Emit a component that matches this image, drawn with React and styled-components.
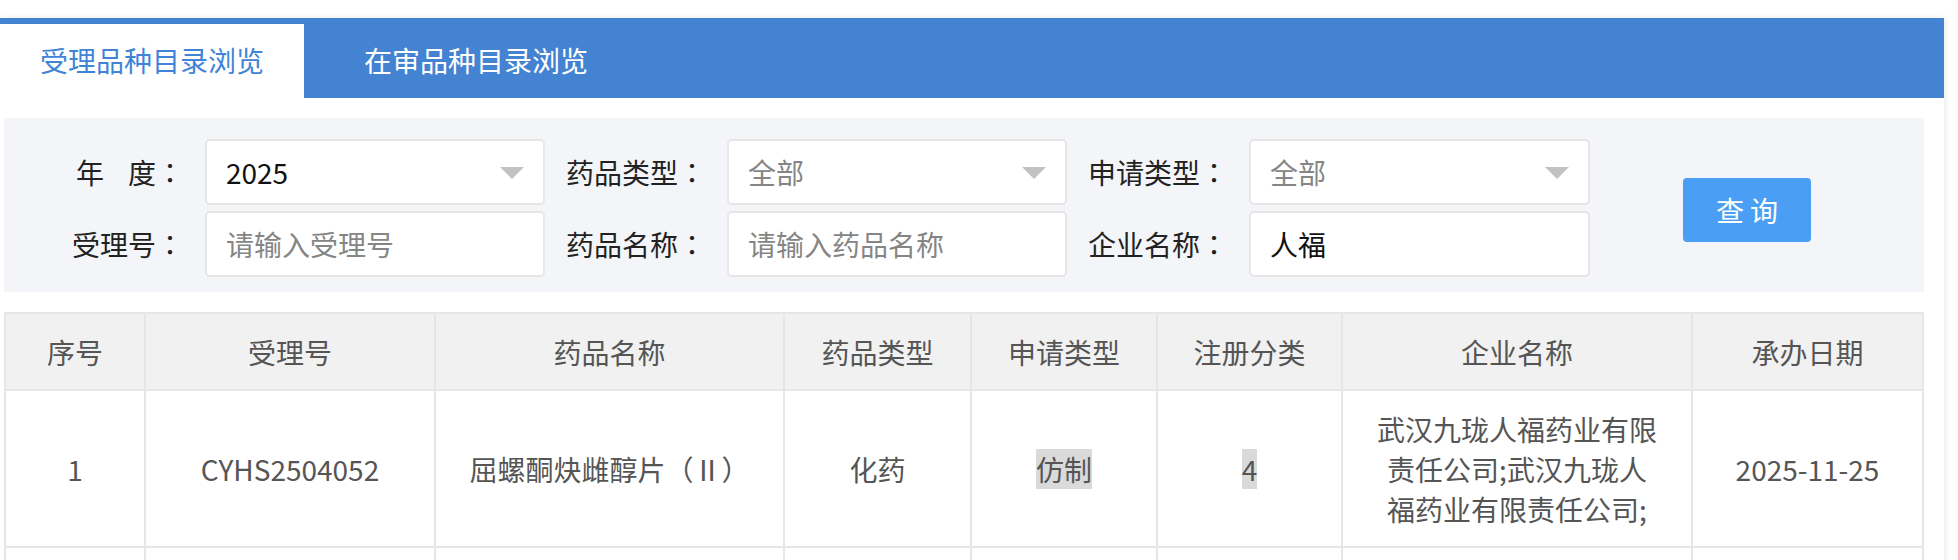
import React from "react";
import styled, { createGlobalStyle } from "styled-components";

const GlobalStyle = createGlobalStyle`
  body {
    margin: 0;
    background: #ffffff;
    font-family: "Noto Sans CJK SC", "Noto Sans", sans-serif;
  }
`;

const Page = styled.div`
  padding-top: 18px;
`;

const Frame = styled.div`
  width: 1944px;
  min-height: 560px;
  background: #ffffff;
  box-shadow: 2px 0 6px rgba(0, 0, 0, 0.08);
`;

const TabBar = styled.div`
  display: flex;
  align-items: flex-end;
  height: 80px;
  background: #4483d2;
`;

const Tab = styled.div`
  display: flex;
  align-items: center;
  justify-content: ${(p) => (p.$active ? "center" : "flex-start")};
  height: 74px;
  width: ${(p) => (p.$active ? "304px" : "auto")};
  padding-left: ${(p) => (p.$active ? "0" : "60px")};
  background: ${(p) => (p.$active ? "#ffffff" : "transparent")};
  color: ${(p) => (p.$active ? "#3f84d6" : "#ffffff")};
  font-size: 28px;
  line-height: 1;
  padding-bottom: 2px;
  box-sizing: border-box;
`;

const Body = styled.div`
  padding: 20px 20px 0 4px;
`;

const Filter = styled.div`
  display: grid;
  grid-template-columns: 180px 340px 140px 340px 140px 341px 1fr;
  grid-auto-rows: 66px;
  column-gap: 21px;
  row-gap: 6px;
  padding: 21px 0 15px;
  background: #f4f5f9;
`;

const Label = styled.div`
  align-self: center;
  text-align: right;
  font-size: 28px;
  color: #222222;
  white-space: nowrap;
`;

const Colon = styled.span`
  font-family: "Noto Sans CJK JP", "Noto Sans CJK SC", sans-serif;
`;

const Sp = styled.span`
  display: inline-block;
  width: 24px;
`;

const Field = styled.div`
  display: flex;
  align-items: center;
  justify-content: space-between;
  box-sizing: border-box;
  height: 66px;
  padding: 0 19px 0 19px;
  background: #ffffff;
  border: 2px solid #e6e6e6;
  border-radius: 5px;
  font-size: 28px;
  color: ${(p) => (p.$muted ? "#858585" : "#111111")};
`;

const Arrow = styled.span`
  width: 0;
  height: 0;
  border-left: 12px solid transparent;
  border-right: 12px solid transparent;
  border-top: 12px solid #c2c2c2;
  margin-top: 2px;
`;

const ButtonCell = styled.div`
  grid-column: 7;
  grid-row: 1 / span 2;
  align-self: center;
  padding-left: 72px;
  padding-top: 4px;
`;

const SearchButton = styled.button`
  width: 128px;
  height: 64px;
  border: none;
  border-radius: 4px;
  background: #4a9ff5;
  color: #ffffff;
  font-family: inherit;
  font-size: 28px;
  letter-spacing: 6px;
  padding: 0 0 0 6px;
`;

const Table = styled.table`
  width: 1918px;
  margin-top: 20px;
  border-collapse: collapse;
  table-layout: fixed;
  font-size: 28px;
  color: #555555;

  th,
  td {
    border: 2px solid #e6e6e6;
    text-align: center;
    vertical-align: middle;
    padding: 0;
  }
`;

const HeadCell = styled.th`
  height: 75px;
  background: #f1f1f1;
  font-weight: normal;
`;

const Cell = styled.td`
  height: 155px;
  line-height: 40px;
`;

const Mark = styled.span`
  background: #dadada;
`;

const columns = [
  ["序号", 140],
  ["受理号", 290],
  ["药品名称", 349],
  ["药品类型", 187],
  ["申请类型", 186],
  ["注册分类", 185],
  ["企业名称", 350],
  ["承办日期", 231],
];

const Lbl = ({ children }) => (
  <Label>
    {children}
    <Colon>：</Colon>
  </Label>
);

export default function App() {
  return (
    <Page>
      <GlobalStyle />
      <Frame>
        <TabBar>
          <Tab $active>受理品种目录浏览</Tab>
          <Tab>在审品种目录浏览</Tab>
        </TabBar>
        <Body>
          <Filter>
            <Lbl>
              年<Sp />度
            </Lbl>
            <Field>
              2025
              <Arrow />
            </Field>
            <Lbl>药品类型</Lbl>
            <Field $muted>
              全部
              <Arrow />
            </Field>
            <Lbl>申请类型</Lbl>
            <Field $muted>
              全部
              <Arrow />
            </Field>
            <ButtonCell>
              <SearchButton>查询</SearchButton>
            </ButtonCell>
            <Lbl>受理号</Lbl>
            <Field $muted>请输入受理号</Field>
            <Lbl>药品名称</Lbl>
            <Field $muted>请输入药品名称</Field>
            <Lbl>企业名称</Lbl>
            <Field>人福</Field>
          </Filter>
          <Table>
            <colgroup>
              {columns.map(([name, w]) => (
                <col key={name} style={{ width: w }} />
              ))}
            </colgroup>
            <thead>
              <tr>
                {columns.map(([name]) => (
                  <HeadCell key={name}>{name}</HeadCell>
                ))}
              </tr>
            </thead>
            <tbody>
              <tr>
                <Cell>1</Cell>
                <Cell>CYHS2504052</Cell>
                <Cell>屈螺酮炔雌醇片（Ⅱ）</Cell>
                <Cell>化药</Cell>
                <Cell>
                  <Mark>仿制</Mark>
                </Cell>
                <Cell>
                  <Mark>4</Mark>
                </Cell>
                <Cell>
                  武汉九珑人福药业有限
                  <br />
                  责任公司;武汉九珑人
                  <br />
                  福药业有限责任公司;
                </Cell>
                <Cell>2025-11-25</Cell>
              </tr>
              <tr>
                {columns.map(([name]) => (
                  <Cell key={name} />
                ))}
              </tr>
            </tbody>
          </Table>
        </Body>
      </Frame>
    </Page>
  );
}
